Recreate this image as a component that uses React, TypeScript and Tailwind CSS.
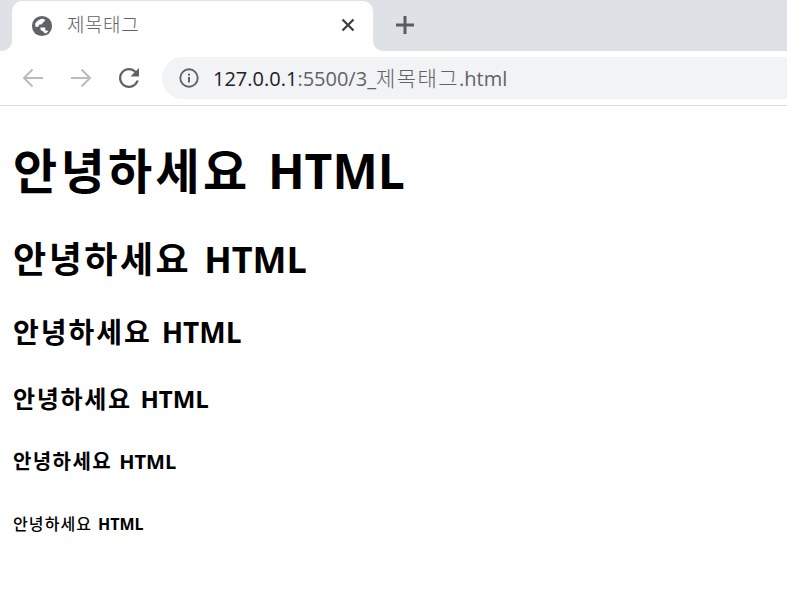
import React from "react";

const FONT = "font-['Noto_Sans_CJK_KR','Noto_Sans',sans-serif]";
const LATIN = "font-['Open_Sans','Noto_Sans_CJK_KR',sans-serif]";

function Heading({ size, mt, korean = "font-bold" }: { size: string; mt: string; korean?: string }) {
  return (
    <div className={`${size} ${mt} ${LATIN} font-bold text-black whitespace-pre`}>
      <span className={`tracking-[0.07em] ${korean}`}>안녕하세요</span>
      <span className="ml-[0.1em]"> HTML</span>
    </div>
  );
}

export default function App() {
  return (
    <div className="w-[787px] h-[596px] bg-white overflow-hidden">
      <div className="h-[51px] bg-[#dee1e6] flex items-end pl-[12px]">
        <div className="relative w-[361px] h-[51px] bg-white rounded-t-[10px] flex items-center pl-[19px] pr-[17px] -mb-px">
          <div className="absolute -left-[12px] bottom-px w-[12px] h-[12px] bg-white">
            <div className="w-full h-full bg-[#dee1e6] rounded-br-[10px]" />
          </div>
          <div className="absolute -right-[12px] bottom-px w-[12px] h-[12px] bg-white">
            <div className="w-full h-full bg-[#dee1e6] rounded-bl-[10px]" />
          </div>
          <svg width="22" height="22" viewBox="0 0 24 24" className="-mt-[1px]">
            <circle cx="12" cy="12" r="11" fill="#5f6368" />
            <path fill="#ffffff" d="M4.500 9.500C6 6.500 9.500 4.200 13.500 4.200L15.500 5.500C14.800 7.500 12.500 8 12 10L8.500 10.500V12.500L5 13Z" />
            <path fill="#ffffff" d="M10 13.500H15.500V16.500L19 17.500C18 19 16.500 20 15 20.300L13.500 18L10.800 16.500Z" />
          </svg>
          <span className={`ml-[14px] text-[19px] leading-none tracking-[0.03em] text-[#5f6368] -mt-[7px] ${FONT} font-light`}>제목태그</span>
          <svg width="16" height="16" viewBox="0 0 16 16" className="ml-auto -mt-[3px] text-[#3c4043]">
            <path d="M2.500 2.500 L13.500 13.500 M13.500 2.500 L2.500 13.500" stroke="currentColor" strokeWidth="2.300" fill="none" />
          </svg>
        </div>
        <div className="ml-[22px] mb-[16px]">
          <svg width="20" height="20" viewBox="0 0 20 20" className="block text-[#5a5d60]">
            <path d="M10 1 V19 M1 10 H19" stroke="currentColor" strokeWidth="3" fill="none" />
          </svg>
        </div>
      </div>

      <div className="h-[55px] bg-white border-b border-[#dadce0] flex items-center pl-[21px]">
        <svg width="24" height="24" viewBox="0 0 24 24" className="text-[#b9bbbe]">
          <path d="M22 12 H3 M11.500 3.500 L3 12 L11.500 20.500" stroke="currentColor" strokeWidth="2" fill="none" />
        </svg>
        <svg width="24" height="24" viewBox="0 0 24 24" className="ml-[24px] text-[#b9bbbe]">
          <path d="M2 12 H21 M12.500 3.500 L21 12 L12.500 20.500" stroke="currentColor" strokeWidth="2" fill="none" />
        </svg>
        <svg width="24" height="24" viewBox="0 0 24 24" className="ml-[24px] text-[#5f6368]">
          <path
            fill="currentColor"
            d="M19 5.100C17.200 3.200 14.700 2 12 2 6.500 2 2 6.500 2 12s4.500 10 10 10c4.700 0 8.600-3.200 9.700-7.500h-2.400c-1 3-3.900 5.200-7.300 5.200-4.300 0-7.700-3.400-7.700-7.700S7.700 4.300 12 4.300c2.100 0 4 .9 5.400 2.300L13.500 10.500H22V2l-3 3.100z"
          />
        </svg>
        <div className="ml-[21px] flex-1 h-[42px] -mr-[20px] bg-[#f1f3f4] rounded-l-full flex items-center pl-[17px]">
          <svg width="20" height="20" viewBox="0 0 20 20" className="text-[#5f6368]">
            <circle cx="10" cy="10" r="8.700" stroke="currentColor" strokeWidth="1.900" fill="none" />
            <rect x="9" y="9" width="2" height="5.500" fill="currentColor" />
            <rect x="9" y="5.600" width="2" height="2" fill="currentColor" />
          </svg>
          <span className={`ml-[14px] text-[20px] leading-none whitespace-pre ${LATIN}`}>
            <span className="text-[#202124]">127.0.0.1</span>
            <span className="text-[#5f6368]">:5500/3_</span>
            <span className="text-[#5f6368] text-[21px] tracking-[0.07em] font-light">제목태그</span>
            <span className="text-[#5f6368]">.html</span>
          </span>
        </div>
      </div>

      <div className="pl-[13px] pt-[34px]">
        <Heading size="text-[48px] leading-[62px]" mt="" />
        <Heading size="text-[36px] leading-[46px]" mt="mt-[35px]" />
        <Heading size="text-[28px] leading-[36px]" mt="mt-[31px]" />
        <Heading size="text-[24px] leading-[30px]" mt="mt-[34px]" />
        <Heading size="text-[20px] leading-[26px]" mt="mt-[35px]" />
        <Heading size="text-[16px] leading-[22px]" mt="mt-[38px]" korean="font-medium" />
      </div>
    </div>
  );
}
